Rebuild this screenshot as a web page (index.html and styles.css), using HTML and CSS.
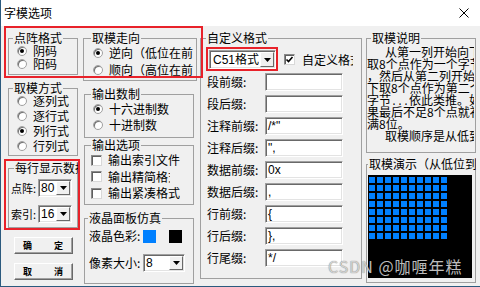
FILE: index.html
```html
<!DOCTYPE html>
<html lang="zh-CN">
<head>
    <meta charset="UTF-8">
    <title>字模选项</title>
    <link rel="stylesheet" href="styles.css">
</head>
<body>
<div class="window">
    <div class="titlebar">
        <span class="title">字模选项</span>
        <svg class="close" width="10" height="10" viewBox="0 0 10 10"><path d="M0.5 0.5L9.5 9.5M9.5 0.5L0.5 9.5" stroke="#000" stroke-width="1"/></svg>
    </div>

    <div class="body">
        <div class="left-block">
            <div class="row-top">
                <fieldset class="group g-dot">
                    <legend>点阵格式</legend>
                    <div class="opt"><span class="radio on"></span>阴码</div>
                    <div class="opt"><span class="radio"></span>阳码</div>
                </fieldset>
                <fieldset class="group g-dir">
                    <legend>取模走向</legend>
                    <div class="opt"><span class="radio on"></span>逆向（低位在前）</div>
                    <div class="opt"><span class="radio"></span>顺向（高位在前）</div>
                </fieldset>
            </div>

            <div class="row-bottom">
                <div class="col-left">
                    <fieldset class="group g-mode">
                        <legend>取模方式</legend>
                        <div class="opt"><span class="radio"></span>逐列式</div>
                        <div class="opt"><span class="radio"></span>逐行式</div>
                        <div class="opt"><span class="radio on"></span>列行式</div>
                        <div class="opt"><span class="radio"></span>行列式</div>
                    </fieldset>
                    <fieldset class="group g-perline">
                        <legend>每行显示数据</legend>
                        <div class="prow">
                            <span class="plabel">点阵:</span>
                            <div class="combo c-small"><span class="val">80</span><span class="drop"><svg width="7" height="4" viewBox="0 0 7 4"><path d="M0 0H7L3.5 4Z"/></svg></span></div>
                        </div>
                        <div class="prow">
                            <span class="plabel">索引:</span>
                            <div class="combo c-small"><span class="val">16</span><span class="drop"><svg width="7" height="4" viewBox="0 0 7 4"><path d="M0 0H7L3.5 4Z"/></svg></span></div>
                        </div>
                    </fieldset>
                    <button class="btn"><span>确</span><span>定</span></button>
                    <button class="btn"><span>取</span><span>消</span></button>
                </div>

                <div class="col-mid">
                    <fieldset class="group g-base">
                        <legend>输出数制</legend>
                        <div class="opt"><span class="radio on"></span>十六进制数</div>
                        <div class="opt"><span class="radio"></span>十进制数</div>
                    </fieldset>
                    <fieldset class="group g-out">
                        <legend>输出选项</legend>
                        <div class="opt"><span class="check"></span><span class="otext">输出索引文件</span></div>
                        <div class="opt"><span class="check"></span><span class="otext short">输出精简格式</span></div>
                        <div class="opt"><span class="check"></span><span class="otext">输出紧凑格式</span></div>
                    </fieldset>
                    <fieldset class="group g-lcd">
                        <legend>液晶面板仿真</legend>
                        <div class="lrow first">
                            <span class="llabel">液晶色彩:</span>
                            <span class="swatch blue"></span>
                            <span class="swatch black"></span>
                        </div>
                        <div class="lrow">
                            <span class="llabel">像素大小:</span>
                            <div class="combo c-px"><span class="val">8</span><span class="drop"><svg width="7" height="4" viewBox="0 0 7 4"><path d="M0 0H7L3.5 4Z"/></svg></span></div>
                        </div>
                    </fieldset>
                </div>
            </div>
        </div>

        <fieldset class="group g-custom">
            <legend>自定义格式</legend>
            <div class="crow">
                <div class="combo c-fmt"><span class="val">C51格式</span><span class="drop"><svg width="7" height="4" viewBox="0 0 7 4"><path d="M0 0H7L3.5 4Z"/></svg></span></div>
                <span class="check on"><svg width="9" height="9" viewBox="0 0 9 9"><path d="M1.5 4.5L3.5 6.5L7.5 2" fill="none" stroke="#000" stroke-width="1.6"/></svg></span>
                <span class="ctext">自定义格式</span>
            </div>
            <div class="frow"><span class="flabel">段前缀:</span><span class="field"></span></div>
            <div class="frow"><span class="flabel">段后缀:</span><span class="field"></span></div>
            <div class="frow"><span class="flabel">注释前缀:</span><span class="field">/*"</span></div>
            <div class="frow"><span class="flabel">注释后缀:</span><span class="field">",</span></div>
            <div class="frow"><span class="flabel">数据前缀:</span><span class="field">0x</span></div>
            <div class="frow"><span class="flabel">数据后缀:</span><span class="field">,</span></div>
            <div class="frow"><span class="flabel">行前缀:</span><span class="field">{</span></div>
            <div class="frow"><span class="flabel">行后缀:</span><span class="field">},</span></div>
            <div class="frow"><span class="flabel">行尾缀:</span><span class="field">*/</span></div>
        </fieldset>

        <div class="col-right">
            <fieldset class="group g-desc">
                <legend>取模说明</legend>
                <div class="desc">
                    <div class="ln indent">从第一列开始向下</div>
                    <div class="ln">取8个点作为一个字节</div>
                    <div class="ln">，然后从第二列开始向</div>
                    <div class="ln">下取8个点作为第二个</div>
                    <div class="ln">字节<span class="dots">...</span>依此类推。如</div>
                    <div class="ln">果最后不足8个点就补</div>
                    <div class="ln">满8位。</div>
                    <div class="ln indent">取模顺序是从低到高</div>
                </div>
            </fieldset>
            <fieldset class="group g-demo">
                <legend>取模演示（从低位到高位）</legend>
                <div class="lcd"><div class="dots-grid"></div></div>
            </fieldset>
        </div>
    </div>

    <div class="mark m1"></div>
    <div class="mark m2"></div>
    <div class="mark m3"></div>
    <div class="watermark">CSDN @咖喱年糕</div>
</div>
</body>
</html>
```

FILE: styles.css
```css
* { box-sizing: border-box; }
body { margin: 0; background: #f0f0f0; }

.window { position: relative; width: 480px; height: 287px; overflow: hidden; background: #f0f0f0; border-left: 1px solid #2b5a7e; border-bottom: 1px solid #2b5a7e; font-family: "Noto Sans CJK SC", sans-serif; font-size: 12px; line-height: 12px; color: #000; }

.titlebar { height: 26px; background: #fff; display: flex; align-items: center; padding-left: 3px; }
.close { margin-left: auto; margin-right: 11px; }

.body { display: flex; align-items: flex-start; padding: 6px 0 0 7px; }

/* group boxes */
.group { margin: 0; padding: 0; border: 1px solid #a0a0a0; min-width: 0; }
.group legend { padding: 0 1px; height: 12px; line-height: 12px; white-space: nowrap; overflow: hidden; }

.row-top { display: flex; align-items: flex-start; }
.row-bottom { display: flex; align-items: flex-start; }

.g-dot { width: 70px; height: 43px; }
.g-dot legend { margin-left: 4px; }
.g-dir { width: 114px; height: 49px; margin-left: 5px; }
.g-dir legend { margin-left: 7px; }

.col-left { width: 70px; display: flex; flex-direction: column; }
.col-mid { width: 110px; margin-left: 6px; display: flex; flex-direction: column; }

.g-mode { height: 74px; margin-top: 1px; }
.g-mode legend { margin-left: 4px; }
.g-perline { height: 66px; margin-top: 6px; }
.g-perline legend { margin-left: 5px; max-width: 64px; }

.g-base { height: 50px; margin-top: 7px; }
.g-base legend { margin-left: 6px; }
.g-out { height: 66px; margin-top: 1px; }
.g-out legend { margin-left: 6px; }
.g-lcd { height: 72px; margin-top: 7px; }
.g-lcd legend { margin-left: 3px; }

.g-custom { width: 162px; height: 247px; margin-left: 3px; }
.g-custom legend { margin-left: 5px; }

.col-right { width: 110px; margin-left: 4px; display: flex; flex-direction: column; }
.g-desc { height: 121px; }
.g-desc legend { margin-left: 4px; }
.g-demo { height: 125px; margin-top: 5px; }
.g-demo legend { margin-left: 1px; max-width: 108px; }

/* radio / check rows */
.opt { display: flex; align-items: center; white-space: nowrap; overflow: hidden; }
.g-dot .opt { height: 13px; padding-left: 8px; }
.g-dir .opt { height: 17px; padding-left: 9px; margin-right: 3px; }
.g-mode .opt { height: 15px; padding-left: 8px; }
.g-mode .opt:first-of-type { margin-top: -1px; }
.g-base .opt { height: 16px; padding-left: 8px; }
.g-base .opt:first-of-type { margin-top: 1px; }
.g-out .opt { height: 16.5px; padding-left: 6px; }
.g-out .opt:first-of-type { margin-top: 1px; }

.radio { position: relative; flex: none; width: 10px; height: 10px; margin-right: 6px; border-radius: 50%; background: #fff; border: 1px solid #a0a0a0; box-shadow: inset 1px 1px 0 #6f6f6f; }
.radio.on::after { content: ""; position: absolute; left: 2px; top: 2px; width: 4px; height: 4px; border-radius: 50%; background: #000; }

.check { flex: none; display: flex; align-items: center; justify-content: center; width: 11px; height: 11px; margin-right: 6px; background: #fff; border: 1px solid; border-color: #8a8a8a #d8d8d8 #d8d8d8 #8a8a8a; box-shadow: inset 1px 1px 0 #5f5f5f; }
.otext { width: 72px; overflow: hidden; }
.otext.short { width: 62px; }

/* combo boxes */
.combo { flex: none; display: flex; background: #fff; border: 1px solid; border-color: #a0a0a0 #fff #fff #a0a0a0; box-shadow: inset 1px 1px 0 #696969, inset -1px -1px 0 #e3e3e3; }
.combo .val { flex: 1; display: flex; align-items: center; padding-left: 2px; font-family: "Liberation Sans", sans-serif; font-size: 12px; white-space: nowrap; overflow: hidden; }
.combo .drop { flex: none; width: 14px; margin: 1px; display: flex; align-items: center; justify-content: center; background: #f0f0f0; border: 1px solid; border-color: #fff #696969 #696969 #fff; }
.c-small { width: 34px; height: 18px; }
.c-px { width: 42px; height: 18px; }
.c-fmt { width: 67px; height: 19px; }
.c-fmt .val { font-family: "Liberation Sans", "Noto Sans CJK SC", sans-serif; padding-left: 3px; }

.prow { display: flex; align-items: center; padding-left: 2px; margin-top: 5px; }
.prow + .prow { margin-top: 8px; }
.plabel { flex: none; width: 27px; font-size: 11px; white-space: nowrap; }

.btn { display: flex; justify-content: space-between; align-items: center; width: 59px; height: 17px; margin: 9px 0 0 6px; padding: 0 9px 0 8px; background: #f0f0f0; border: 1px solid; border-color: #fff #696969 #696969 #fff; box-shadow: inset -1px -1px 0 #a0a0a0; font-family: "Noto Sans CJK SC", sans-serif; font-size: 9px; font-weight: bold; line-height: 9px; color: #000; }

/* lcd simulation */
.lrow { display: flex; align-items: center; padding-left: 4px; }
.lrow.first { margin-top: 5px; height: 14px; }
.lrow + .lrow { margin-top: 11px; }
.llabel { flex: none; width: 54px; white-space: nowrap; }
.swatch { flex: none; width: 13px; height: 13px; }
.swatch.blue { background: #0080ff; margin-right: 13px; }
.swatch.black { background: #000; }

/* custom format */
.crow { display: flex; align-items: center; padding-left: 8px; margin-top: 6px; }
.crow .check { margin-left: 8px; margin-right: 7px; }
.ctext { width: 51px; overflow: hidden; white-space: nowrap; }
.frow { display: flex; align-items: center; padding-left: 6px; height: 18px; margin-top: 4px; }
.flabel { flex: none; width: 58px; white-space: nowrap; }
.field { flex: none; width: 78px; height: 18px; padding-left: 2px; display: flex; align-items: center; background: #fff; border: 1px solid; border-color: #a0a0a0 #fff #fff #a0a0a0; box-shadow: inset 1px 1px 0 #696969, inset -1px -1px 0 #e3e3e3; font-family: "Liberation Sans", sans-serif; font-size: 12px; }

/* description */
.desc { margin-top: 2px; width: 107px; overflow: hidden; }
.ln { height: 12px; white-space: nowrap; }
.ln.indent { padding-left: 18px; }
.dots { font-family: "Liberation Mono", monospace; font-size: 10px; }

.lcd { width: 104px; height: 103px; margin: 5px 0 0 1px; background: #000; padding: 2px 0 0 1px; }
.dots-grid { width: 78px; height: 62px; background-image: linear-gradient(to bottom, transparent 6px, #000 6px), linear-gradient(to right, #0080ff 6px, #000 6px); background-size: 8px 8px; }

/* annotations laid over the dialog */
.mark { position: absolute; border: 2px solid #e8222a; }
.m1 { left: 3px; top: 26px; width: 199px; height: 52px; }
.m2 { left: 205px; top: 47px; width: 72px; height: 24px; }
.m3 { left: 3px; top: 159px; width: 76px; height: 71px; }

.watermark { position: absolute; left: 327px; top: 257px; font-size: 16px; line-height: 18px; letter-spacing: 1px; white-space: nowrap; color: rgba(225, 225, 225, 0.85); text-shadow: 0 0 1px rgba(0, 0, 0, 0.6); }
```
